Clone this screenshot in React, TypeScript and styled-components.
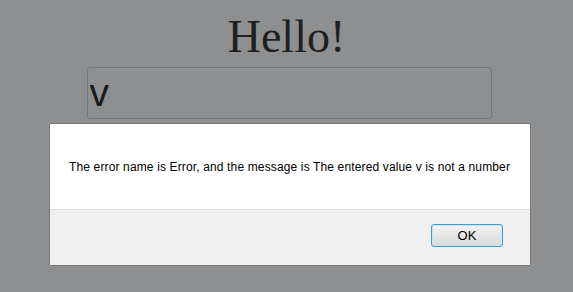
import React from 'react'
import styled, { createGlobalStyle } from 'styled-components'

const GlobalStyle = createGlobalStyle`
  html, body {
    margin: 0;
    padding: 0;
    background: #8e8f91;
    height: 100%;
  }
  #root {
    position: relative;
    width: 573px;
    height: 292px;
    overflow: hidden;
  }
`

const Page = styled.div`
  width: 573px;
  display: flex;
  flex-direction: column;
  align-items: center;
`

const Title = styled.h1`
  margin: 11px 0 0;
  font-family: 'Liberation Serif', 'Times New Roman', serif;
  font-weight: normal;
  font-size: 46px;
  line-height: 52px;
  color: #1f1f1f;
`

const ValueInput = styled.input`
  box-sizing: border-box;
  margin: 4px 0 0 5px;
  width: 405px;
  height: 52px;
  padding: 0 2px;
  border: 1px solid #77787a;
  border-radius: 3px;
  background: #8e8f91;
  font-family: 'Liberation Sans', Arial, sans-serif;
  font-size: 39px;
  color: #1a1a1a;
  outline: none;
`

const Dialog = styled.div`
  position: absolute;
  left: 49px;
  top: 123px;
  width: 482px;
  height: 143px;
  box-sizing: border-box;
  border: 1px solid #77787a;
  border-radius: 2px;
  background: #fff;
  display: flex;
  flex-direction: column;
  overflow: hidden;
  font-family: 'Liberation Sans', Arial, sans-serif;
`

const Message = styled.div`
  height: 85px;
  display: flex;
  align-items: center;
  padding-left: 19px;
  font-size: 12px;
  letter-spacing: 0.14px;
  color: #000;
  border-bottom: 1px solid #dfdfdf;
`

const Footer = styled.div`
  flex: 1;
  background: #f0f0f0;
  display: flex;
  justify-content: flex-end;
  align-items: flex-start;
  padding: 14px 27px 0 0;
`

const OkButton = styled.button`
  width: 72px;
  height: 23px;
  border: 1px solid #3c9dd6;
  border-radius: 3px;
  background: linear-gradient(#f3f3f3, #e6e6e6 50%, #dadada);
  box-shadow: inset 0 0 0 1px #c9e6f8;
  font-family: 'Liberation Sans', Arial, sans-serif;
  font-size: 13px;
  color: #000;
  padding: 0;
`

export default function App() {
  return (
    <>
      <GlobalStyle />
      <Page>
        <Title>Hello!</Title>
        <ValueInput defaultValue="v" />
      </Page>
      <Dialog>
        <Message>
          The error name is Error, and the message is The entered value v is not a number
        </Message>
        <Footer>
          <OkButton>OK</OkButton>
        </Footer>
      </Dialog>
    </>
  )
}
